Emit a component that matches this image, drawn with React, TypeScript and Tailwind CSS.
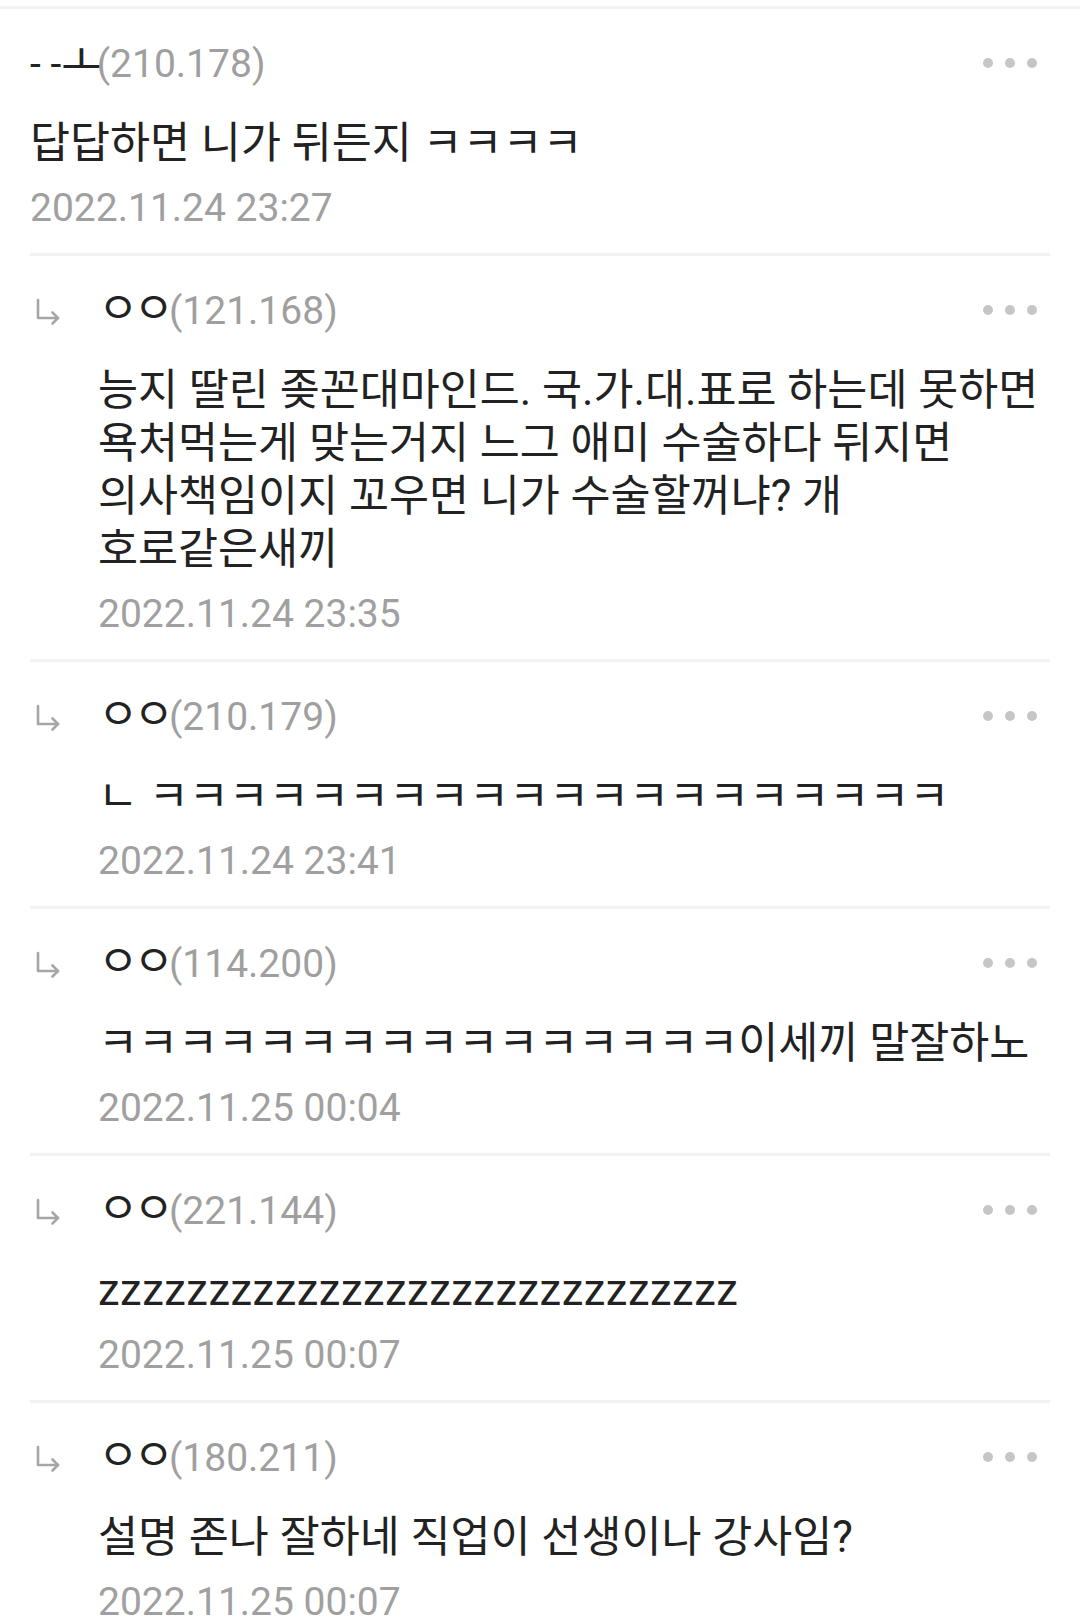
type Comment = {
    pre?: string;
    nick: string;
    ip: string;
    lines: string[];
    date: string;
    reply: boolean;
};

const comments: Comment[] = [
    {
        pre: "- -",
        nick: "ㅗ",
        ip: "210.178",
        lines: ["답답하면 니가 뒤든지 ㅋㅋㅋㅋ"],
        date: "2022.11.24 23:27",
        reply: false
    },
    {
        nick: "ㅇㅇ",
        ip: "121.168",
        lines: [
            "능지 딸린 좆꼰대마인드. 국.가.대.표로 하는데 못하면",
            "욕처먹는게 맞는거지 느그 애미 수술하다 뒤지면",
            "의사책임이지 꼬우면 니가 수술할꺼냐? 개",
            "호로같은새끼"
        ],
        date: "2022.11.24 23:35",
        reply: true
    },
    {
        nick: "ㅇㅇ",
        ip: "210.179",
        lines: ["ㄴ ㅋㅋㅋㅋㅋㅋㅋㅋㅋㅋㅋㅋㅋㅋㅋㅋㅋㅋㅋㅋ"],
        date: "2022.11.24 23:41",
        reply: true
    },
    {
        nick: "ㅇㅇ",
        ip: "114.200",
        lines: ["ㅋㅋㅋㅋㅋㅋㅋㅋㅋㅋㅋㅋㅋㅋㅋㅋ이세끼 말잘하노"],
        date: "2022.11.25 00:04",
        reply: true
    },
    {
        nick: "ㅇㅇ",
        ip: "221.144",
        lines: ["zzzzzzzzzzzzzzzzzzzzzzzzzzzzz"],
        date: "2022.11.25 00:07",
        reply: true
    },
    {
        nick: "ㅇㅇ",
        ip: "180.211",
        lines: ["설명 존나 잘하네 직업이 선생이나 강사임?"],
        date: "2022.11.25 00:07",
        reply: true
    }
];

function ReplyArrow() {
    return (
        <svg width="26" height="28" viewBox="0 0 26 28" fill="none" stroke="#a6a6a6" strokeWidth="2.6" strokeLinecap="round" strokeLinejoin="round">
            <path d="M3 3 V21 H23" />
            <path d="M17.5 15.5 L23 21 L17.5 26.5" />
        </svg>
    );
}

function MoreDots() {
    return (
        <div className="flex items-center gap-[12px] mr-[13px]">
            <span className="w-[10px] h-[10px] rounded-full bg-[#c6c6c6]" />
            <span className="w-[10px] h-[10px] rounded-full bg-[#c6c6c6]" />
            <span className="w-[10px] h-[10px] rounded-full bg-[#c6c6c6]" />
        </div>
    );
}

function CommentItem({ c, last }: { c: Comment; last: boolean }) {
    const zs = c.lines[0].startsWith("z");
    return (
        <div className={`mx-[30px] pb-[23px] ${last ? "" : "border-b-[3px] border-[#f2f2f2]"}`}>
            <div className="flex items-center h-[44px] mt-[32px]">
                {c.reply && (
                    <div className="w-[68px] pl-[5px] flex items-center pt-[2px]">
                        <ReplyArrow />
                    </div>
                )}
                <div className="flex-1 text-[39px] leading-[44px] whitespace-nowrap">
                    {c.pre && <span className="text-[#222222]">{c.pre}</span>}
                    <span className="text-[#222222] text-[44px] tracking-[-5px]">{c.nick}</span>
                    <span className="text-[#9f9f9f]">({c.ip})</span>
                </div>
                <MoreDots />
            </div>
            <div className={`mt-[32px] text-[43.5px] leading-[53px] text-[#222222] ${c.reply ? "pl-[68px]" : ""} ${zs ? "tracking-[0.5px]" : ""}`}>
                {c.lines.map((l, i) => (
                    <div key={i} className="whitespace-nowrap">{l}</div>
                ))}
            </div>
            <div className={`mt-[16px] h-[44px] text-[39px] leading-[44px] text-[#a0a0a0] ${c.reply ? "pl-[68px]" : ""}`}>
                {c.date}
            </div>
        </div>
    );
}

export default function App() {
    return (
        <div className="w-[1080px] h-[1623px] overflow-hidden bg-white font-['Roboto','Noto_Sans_CJK_KR',sans-serif]">
            <div className="pt-[6px]">
                <div className="h-[3px] bg-[#f2f2f2]" />
            </div>
            {comments.map((c, i) => (
                <CommentItem key={i} c={c} last={i === comments.length - 1} />
            ))}
        </div>
    );
}
